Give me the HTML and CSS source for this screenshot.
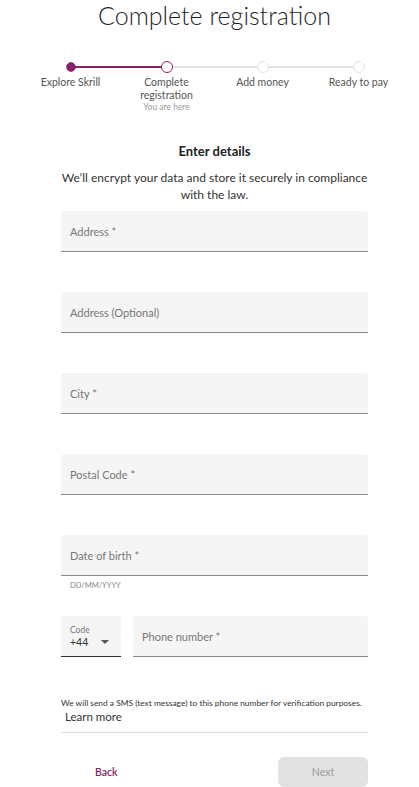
FILE: index.html
```html
<!DOCTYPE html>
<html lang="en">
<head>
    <meta charset="UTF-8" />
    <meta name="viewport" content="width=device-width, initial-scale=1.0"/>
    <title>Complete registration</title>
    <link rel="stylesheet" href="styles.css">
</head>
<body>
    <div class="page">
        <h1>Complete registration</h1>

        <div class="stepper">
            <div class="step done">
                <span class="dot"></span>
                <span class="step-label">Explore Skrill</span>
            </div>
            <div class="step current">
                <span class="dot"></span>
                <span class="step-label">Complete registration</span>
                <span class="step-note">You are here</span>
            </div>
            <div class="step">
                <span class="dot"></span>
                <span class="step-label">Add money</span>
            </div>
            <div class="step">
                <span class="dot"></span>
                <span class="step-label">Ready to pay</span>
            </div>
        </div>

        <h2>Enter details</h2>
        <p class="intro">We’ll encrypt your data and store it securely in compliance with the law.</p>

        <form class="details">
            <div class="field"><span class="field-label">Address *</span></div>
            <div class="field"><span class="field-label">Address (Optional)</span></div>
            <div class="field"><span class="field-label">City *</span></div>
            <div class="field"><span class="field-label">Postal Code *</span></div>
            <div class="field-group">
                <div class="field"><span class="field-label">Date of birth *</span></div>
                <span class="hint">DD/MM/YYYY</span>
            </div>
            <div class="phone-row">
                <div class="field code">
                    <span class="code-label">Code</span>
                    <span class="code-value">+44 <span class="caret"></span></span>
                </div>
                <div class="field phone"><span class="field-label">Phone number *</span></div>
            </div>

            <div class="sms">
                <p>We will send a SMS (text message) to this phone number for verification purposes.</p>
                <a href="#" class="learn">Learn more</a>
            </div>

            <div class="actions">
                <button type="button" class="back">Back</button>
                <button type="button" class="next" disabled>Next</button>
            </div>
        </form>
    </div>
</body>
</html>
```

FILE: styles.css
```css
* {
    box-sizing: border-box;
    margin: 0;
    padding: 0;
}

body {
    font-family: 'Lato', 'Open Sans', sans-serif;
    background: #ffffff;
    color: #222;
}

.page {
    width: 419px;
    padding-left: 10px;
    display: flex;
    flex-direction: column;
    align-items: center;
}

h1 {
    font-size: 25px;
    font-weight: 300;
    color: #1f1f1f;
    line-height: 30px;
}

.stepper {
    display: grid;
    grid-template-columns: repeat(4, 96px);
    margin-top: 31px;
    position: relative;
}

.step {
    display: flex;
    flex-direction: column;
    align-items: center;
    position: relative;
}

/* connecting line to the next step */
.step::after {
    content: '';
    position: absolute;
    top: 5px;
    left: 48px;
    width: 96px;
    height: 2px;
    background: #e3e3e3;
}

.step:last-child::after {
    display: none;
}

.step.done::after {
    background: #862165;
}

.dot {
    width: 12px;
    height: 12px;
    border-radius: 50%;
    background: #fff;
    border: 1.5px solid #e3e3e3;
    position: relative;
    z-index: 1;
}

.step.done .dot {
    background: #862165;
    border-color: #862165;
    transform: scale(0.8);
}

.step.current .dot {
    border-color: #862165;
}

.step-label {
    font-size: 10.5px;
    color: #555;
    text-align: center;
    line-height: 13px;
    margin-top: 3px;
    width: 70px;
}

.step-note {
    font-size: 8.5px;
    color: #999;
    line-height: 11px;
}

h2 {
    font-size: 13px;
    font-weight: 700;
    color: #222;
    margin-top: 29px;
    line-height: 18px;
}

.intro {
    font-size: 12px;
    color: #333;
    text-align: center;
    width: 310px;
    line-height: 17px;
    margin-top: 9px;
}

.details {
    width: 307px;
    display: flex;
    flex-direction: column;
    gap: 40px;
    margin-top: 8px;
}

.field {
    height: 41px;
    background: #f5f5f5;
    border-bottom: 1px solid #8a8a8a;
    border-radius: 4px 4px 0 0;
    display: flex;
    align-items: center;
    padding: 0 9px;
}

.field-label {
    font-size: 11px;
    color: #777;
}

.field-group {
    display: flex;
    flex-direction: column;
    margin-bottom: -16px;
}

.hint {
    font-size: 7.5px;
    color: #888;
    padding: 5px 9px 0;
    height: 16px;
}

.phone-row {
    display: flex;
    gap: 12px;
}

.field.code {
    width: 60px;
    flex-direction: column;
    align-items: flex-start;
    justify-content: center;
    border-bottom-color: #333;
}

.code-label {
    font-size: 8.5px;
    color: #777;
    line-height: 11px;
}

.code-value {
    font-size: 10.5px;
    color: #333;
    display: flex;
    align-items: center;
    width: 100%;
    justify-content: space-between;
    padding-right: 3px;
}

.caret {
    width: 0;
    height: 0;
    border-left: 4px solid transparent;
    border-right: 4px solid transparent;
    border-top: 4px solid #555;
}

.field.phone {
    flex: 1;
}

.sms {
    border-bottom: 1px solid #ddd;
    padding-bottom: 7px;
}

.sms p {
    font-size: 8.4px;
    color: #333;
    line-height: 12px;
    white-space: nowrap;
}

.learn {
    display: block;
    font-size: 11.5px;
    color: #333;
    text-decoration: none;
    padding-left: 4px;
    line-height: 16px;
}

.actions {
    display: flex;
    justify-content: space-between;
    margin-top: -16px;
}

.actions button {
    font-family: 'Lato', 'Open Sans', sans-serif;
    font-size: 10.5px;
    border: none;
    height: 30px;
    width: 90px;
    border-radius: 6px;
}

.back {
    background: none;
    color: #862165;
    font-weight: 600;
    text-align: left;
    padding-left: 34px;
}

.next {
    background: #e2e2e2;
    color: #9c9c9c;
}
```
